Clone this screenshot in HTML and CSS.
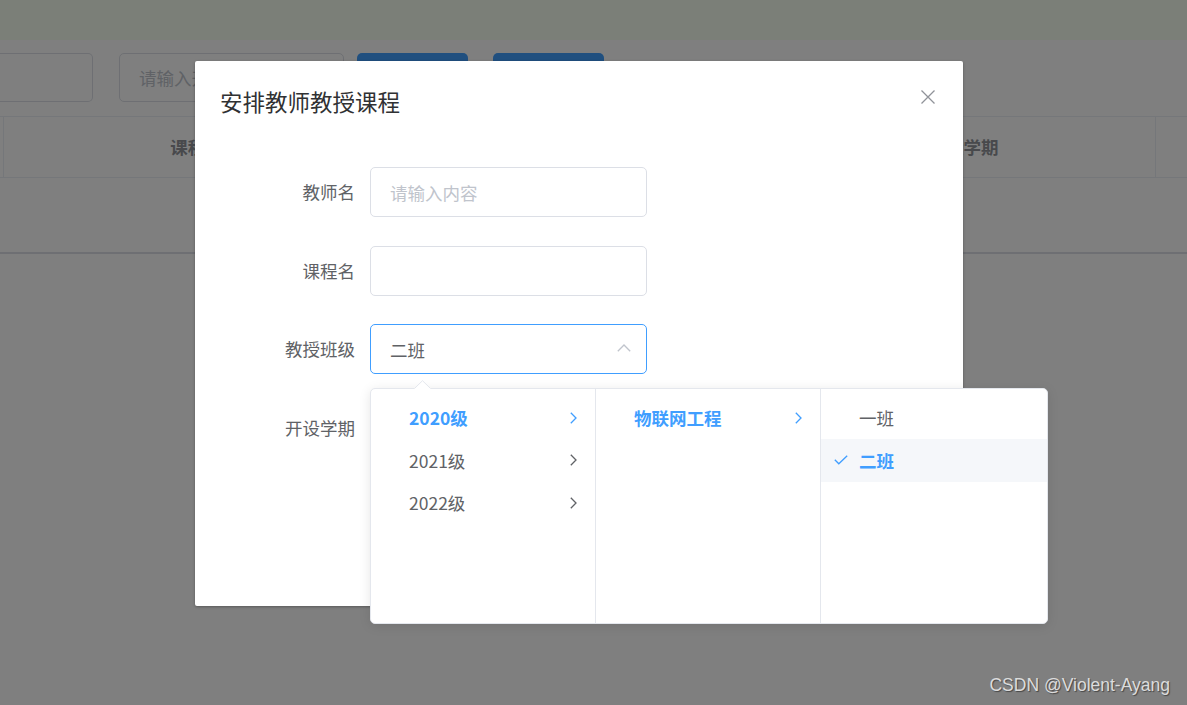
FILE: index.html
```html
<!DOCTYPE html>
<html lang="zh-CN">
<head>
<meta charset="utf-8">
<title>安排教师教授课程</title>
<link rel="stylesheet" href="styles.css">
</head>
<body>
<div class="page">
  <div class="topbar"></div>
  <div class="toolbar">
    <div class="bg-input first"></div>
    <div class="bg-input second"><span class="bg-ph">请输入开设学期</span></div>
    <div class="bg-btn">查询</div>
    <div class="bg-btn">添加</div>
  </div>
  <div class="table">
    <div class="thead">
      <div class="th c0"></div>
      <div class="th c1">课程名</div>
      <div class="th c2">教师名</div>
      <div class="th c3">开设学期</div>
      <div class="th c4"></div>
    </div>
    <div class="tbody"></div>
  </div>
</div>

<div class="overlay"></div>

<div class="dialog">
  <div class="dlg-header">
    <span class="dlg-title">安排教师教授课程</span>
    <button class="dlg-close" type="button" aria-label="关闭">
      <svg width="14" height="14" viewBox="0 0 14 14"><path d="M0.5 0.5 L13.5 13.5 M13.5 0.5 L0.5 13.5" stroke="#909399" stroke-width="1.3" fill="none"/></svg>
    </button>
  </div>
  <div class="dlg-body">
    <div class="form-item">
      <label class="form-label">教师名</label>
      <div class="input"><span class="placeholder">请输入内容</span></div>
    </div>
    <div class="form-item">
      <label class="form-label">课程名</label>
      <div class="input"></div>
    </div>
    <div class="form-item">
      <label class="form-label">教授班级</label>
      <div class="input select">
        <span class="select-value">二班</span>
        <svg class="select-arrow" width="14" height="8" viewBox="0 0 14 8"><polyline points="0.8,7.3 7,1 13.2,7.3" stroke="#c0c4cc" stroke-width="1.3" fill="none"/></svg>
        <div class="cascader">
          <svg class="popper-arrow" width="17" height="9" viewBox="0 0 17 9"><polygon points="0,9 8.5,0.5 17,9" fill="#fff"/><polyline points="0.5,8.5 8.5,0.7 16.5,8.5" stroke="#e4e7ed" stroke-width="1" fill="none"/></svg>
          <div class="menu">
            <div class="node active"><span class="prefix"></span><span class="label">2020级</span><svg class="chev" width="7" height="12" viewBox="0 0 7 12"><polyline points="0.8,0.8 6,6 0.8,11.2" stroke="currentColor" stroke-width="1.3" fill="none"/></svg></div>
            <div class="node"><span class="prefix"></span><span class="label">2021级</span><svg class="chev" width="7" height="12" viewBox="0 0 7 12"><polyline points="0.8,0.8 6,6 0.8,11.2" stroke="currentColor" stroke-width="1.3" fill="none"/></svg></div>
            <div class="node"><span class="prefix"></span><span class="label">2022级</span><svg class="chev" width="7" height="12" viewBox="0 0 7 12"><polyline points="0.8,0.8 6,6 0.8,11.2" stroke="currentColor" stroke-width="1.3" fill="none"/></svg></div>
          </div>
          <div class="menu">
            <div class="node active"><span class="prefix"></span><span class="label">物联网工程</span><svg class="chev" width="7" height="12" viewBox="0 0 7 12"><polyline points="0.8,0.8 6,6 0.8,11.2" stroke="currentColor" stroke-width="1.3" fill="none"/></svg></div>
          </div>
          <div class="menu last">
            <div class="node"><span class="prefix"></span><span class="label">一班</span></div>
            <div class="node active selected"><span class="prefix"><svg width="14" height="10" viewBox="0 0 14 10"><polyline points="0.8,4.8 4.8,8.8 13.2,0.8" stroke="#409eff" stroke-width="1.3" fill="none"/></svg></span><span class="label">二班</span></div>
          </div>
        </div>
      </div>
    </div>
    <div class="form-item">
      <label class="form-label">开设学期</label>
      <div class="input"></div>
    </div>
  </div>
  <div class="dlg-footer">
    <button class="btn" type="button">取 消</button>
    <button class="btn primary" type="button">确 定</button>
  </div>
</div>

<div class="watermark">CSDN @Violent-Ayang</div>
</body>
</html>
```

FILE: styles.css
```css
* { box-sizing: border-box; }
html, body { margin: 0; padding: 0; }
body {
  width: 1187px;
  height: 705px;
  overflow: hidden;
  position: relative;
  background: #fff;
  font-family: "Noto Sans CJK SC", "Liberation Sans", sans-serif;
  font-size: 17.5px;
  line-height: 1.2;
  color: #606266;
}

/* background page */
.topbar { height: 40px; background: #f6fff0; }
.toolbar {
  height: 76px;
  padding-top: 13px;
  display: flex;
  align-items: flex-start;
}
.bg-input {
  height: 49px;
  border: 1px solid #dcdfe6;
  border-radius: 5px;
  background: #fff;
  display: flex;
  align-items: center;
  padding: 0 19px;
}
.bg-input.first { width: 93px; border-left: none; border-radius: 0 5px 5px 0; margin-right: 26px; }
.bg-input.second { width: 225px; margin-right: 13px; }
.bg-ph { color: #c0c4cc; white-space: nowrap; }
.bg-btn {
  width: 111px;
  height: 49px;
  border-radius: 5px;
  background: #409eff;
  color: #fff;
  display: flex;
  align-items: center;
  justify-content: center;
  margin-right: 25px;
}
.table { border-top: 1px solid #ebeef5; }
.thead { display: flex; height: 61px; border-bottom: 1px solid #ebeef5; }
.th {
  border-right: 1px solid #ebeef5;
  font-weight: bold;
  color: #909399;
  text-align: center;
  line-height: 60px;
}
.c0 { width: 4px; }
.c1 { width: 386px; }
.c2 { width: 382px; }
.c3 { width: 384px; }
.c4 { flex: 1; border-right: none; }
.tbody { height: 76px; border-bottom: 2px solid #dcdfe6; }

.overlay {
  position: absolute;
  inset: 0;
  background: rgba(0, 0, 0, 0.5);
}

/* dialog */
.dialog {
  position: absolute;
  left: 195px;
  top: 61px;
  width: 768px;
  background: #fff;
  border-radius: 2px;
  box-shadow: 0 1px 3px rgba(0, 0, 0, 0.3);
}
.dlg-header { position: relative; padding: 25px 25px 13px; }
.dlg-title { display: block; font-size: 22.5px; line-height: 30px; color: #303133; }
.dlg-close {
  position: absolute;
  top: 29px;
  right: 28px;
  width: 14px;
  height: 14px;
  padding: 0;
  border: none;
  background: none;
  display: flex;
}
.dlg-body { padding: 38px 25px 37.5px; }
.form-item { display: flex; margin-bottom: 28.5px; }
.form-label {
  width: 150px;
  padding-right: 15px;
  text-align: right;
  line-height: 50px;
  color: #606266;
}
.input {
  width: 277px;
  height: 50px;
  border: 1px solid #dcdfe6;
  border-radius: 5px;
  padding: 0 19px;
  display: flex;
  align-items: center;
  background: #fff;
}
.placeholder { color: #c0c4cc; }
.select { position: relative; border-color: #409eff; justify-content: space-between; padding-right: 15px; }
.select-value { color: #606266; }
.select-arrow { display: block; margin-top: -2px; }

.dlg-footer {
  padding: 12.5px 25px 25px;
  display: flex;
  justify-content: flex-end;
  gap: 15px;
}
.btn {
  height: 50px;
  padding: 0 25px;
  border: 1px solid #dcdfe6;
  border-radius: 5px;
  background: #fff;
  color: #606266;
  font: inherit;
}
.btn.primary { background: #409eff; border-color: #409eff; color: #fff; }

/* cascader dropdown */
.cascader {
  position: absolute;
  top: 63px;
  left: -1px;
  width: 678px;
  height: 236px;
  display: flex;
  background: #fff;
  border: 1px solid #e4e7ed;
  border-radius: 5px;
  box-shadow: 0 2px 12px rgba(0, 0, 0, 0.1);
}
.popper-arrow { position: absolute; top: -9px; left: 43px; display: block; }
.menu {
  width: 225px;
  padding: 7.5px 0;
  border-right: 1px solid #e4e7ed;
}
.menu.last { flex: 1; border-right: none; }
.node {
  height: 42.5px;
  display: flex;
  align-items: center;
  padding: 0 18px 0 13px;
  color: #606266;
}
.prefix { width: 14px; margin-right: 11px; display: flex; align-items: center; }
.prefix svg { display: block; }
.label { flex: 1; white-space: nowrap; }
.chev { display: block; color: #606266; }
.node.active { color: #409eff; font-weight: bold; }
.node.active .chev { color: #409eff; }
.node.selected { background: #f5f7fa; }

.watermark {
  position: absolute;
  right: 17px;
  bottom: 9px;
  font-family: "Liberation Sans", sans-serif;
  font-size: 17.5px;
  color: #dcdcdc;
  text-shadow: 1px 1px 1px rgba(0, 0, 0, 0.45);
}
```
